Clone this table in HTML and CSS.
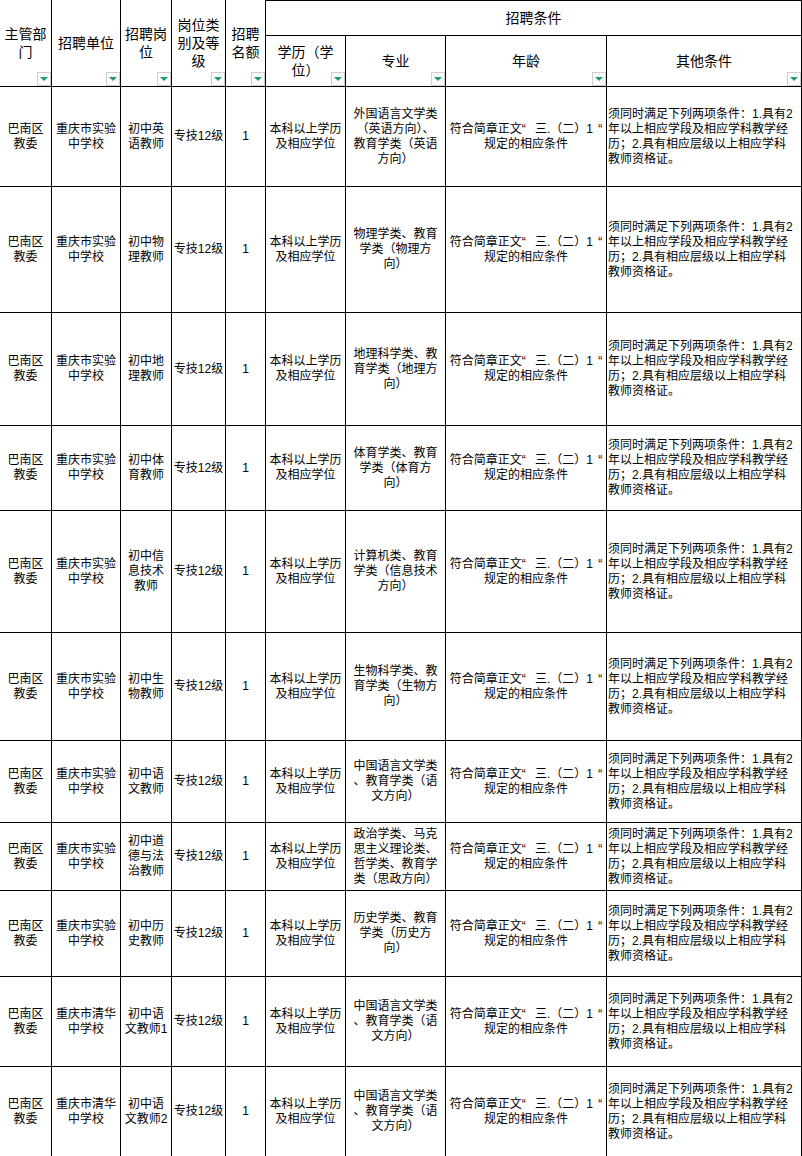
FILE: index.html
```html
<!DOCTYPE html>
<html lang="zh-CN">
<head>
<meta charset="utf-8">
<title>招聘岗位表</title>
<link rel="stylesheet" href="styles.css">
</head>
<body>
<table class="sheet">
  <colgroup>
    <col class="c1"><col class="c2"><col class="c3"><col class="c4"><col class="c5">
    <col class="c6"><col class="c7"><col class="c8"><col class="c9">
  </colgroup>
  <thead>
    <tr class="hr1">
      <th rowspan="2">主管部<br>门<span class="filter"></span></th>
      <th rowspan="2">招聘单位<span class="filter"></span></th>
      <th rowspan="2">招聘岗<br>位<span class="filter"></span></th>
      <th rowspan="2">岗位类<br>别及等<br>级<span class="filter"></span></th>
      <th rowspan="2">招聘<br>名额<span class="filter"></span></th>
      <th colspan="4" class="group">招聘条件</th>
    </tr>
    <tr class="hr2">
      <th>学历（学<br>位）<span class="filter"></span></th>
      <th>专业<span class="filter"></span></th>
      <th>年龄<span class="filter"></span></th>
      <th>其他条件<span class="filter"></span></th>
    </tr>
  </thead>
  <tbody>
    <tr class="h100">
      <td>巴南区<br>教委</td><td>重庆市实验<br>中学校</td><td>初中英<br>语教师</td><td>专技12级</td><td>1</td>
      <td>本科以上学历<br>及相应学位</td>
      <td>外国语言文学类<br>（英语方向）、<br>教育学类（英语<br>方向）</td>
      <td>符合简章正文<span class="qo">“</span> 三.（二）1 <span class="qc">“</span><br>规定的相应条件</td>
      <td class="left">须同时满足下列两项条件：1.具有2<br>年以上相应学段及相应学科教学经<br>历；2.具有相应层级以上相应学科<br>教师资格证。</td>
    </tr>
    <tr class="h126">
      <td>巴南区<br>教委</td><td>重庆市实验<br>中学校</td><td>初中物<br>理教师</td><td>专技12级</td><td>1</td>
      <td>本科以上学历<br>及相应学位</td>
      <td>物理学类、教育<br>学类（物理方<br>向）</td>
      <td>符合简章正文<span class="qo">“</span> 三.（二）1 <span class="qc">“</span><br>规定的相应条件</td>
      <td class="left">须同时满足下列两项条件：1.具有2<br>年以上相应学段及相应学科教学经<br>历；2.具有相应层级以上相应学科<br>教师资格证。</td>
    </tr>
    <tr class="h113">
      <td>巴南区<br>教委</td><td>重庆市实验<br>中学校</td><td>初中地<br>理教师</td><td>专技12级</td><td>1</td>
      <td>本科以上学历<br>及相应学位</td>
      <td>地理科学类、教<br>育学类（地理方<br>向）</td>
      <td>符合简章正文<span class="qo">“</span> 三.（二）1 <span class="qc">“</span><br>规定的相应条件</td>
      <td class="left">须同时满足下列两项条件：1.具有2<br>年以上相应学段及相应学科教学经<br>历；2.具有相应层级以上相应学科<br>教师资格证。</td>
    </tr>
    <tr class="h85">
      <td>巴南区<br>教委</td><td>重庆市实验<br>中学校</td><td>初中体<br>育教师</td><td>专技12级</td><td>1</td>
      <td>本科以上学历<br>及相应学位</td>
      <td>体育学类、教育<br>学类（体育方<br>向）</td>
      <td>符合简章正文<span class="qo">“</span> 三.（二）1 <span class="qc">“</span><br>规定的相应条件</td>
      <td class="left">须同时满足下列两项条件：1.具有2<br>年以上相应学段及相应学科教学经<br>历；2.具有相应层级以上相应学科<br>教师资格证。</td>
    </tr>
    <tr class="h122">
      <td>巴南区<br>教委</td><td>重庆市实验<br>中学校</td><td>初中信<br>息技术<br>教师</td><td>专技12级</td><td>1</td>
      <td>本科以上学历<br>及相应学位</td>
      <td>计算机类、教育<br>学类（信息技术<br>方向）</td>
      <td>符合简章正文<span class="qo">“</span> 三.（二）1 <span class="qc">“</span><br>规定的相应条件</td>
      <td class="left">须同时满足下列两项条件：1.具有2<br>年以上相应学段及相应学科教学经<br>历；2.具有相应层级以上相应学科<br>教师资格证。</td>
    </tr>
    <tr class="h108">
      <td>巴南区<br>教委</td><td>重庆市实验<br>中学校</td><td>初中生<br>物教师</td><td>专技12级</td><td>1</td>
      <td>本科以上学历<br>及相应学位</td>
      <td>生物科学类、教<br>育学类（生物方<br>向）</td>
      <td>符合简章正文<span class="qo">“</span> 三.（二）1 <span class="qc">“</span><br>规定的相应条件</td>
      <td class="left">须同时满足下列两项条件：1.具有2<br>年以上相应学段及相应学科教学经<br>历；2.具有相应层级以上相应学科<br>教师资格证。</td>
    </tr>
    <tr class="h82">
      <td>巴南区<br>教委</td><td>重庆市实验<br>中学校</td><td>初中语<br>文教师</td><td>专技12级</td><td>1</td>
      <td>本科以上学历<br>及相应学位</td>
      <td>中国语言文学类<br>、教育学类（语<br>文方向）</td>
      <td>符合简章正文<span class="qo">“</span> 三.（二）1 <span class="qc">“</span><br>规定的相应条件</td>
      <td class="left">须同时满足下列两项条件：1.具有2<br>年以上相应学段及相应学科教学经<br>历；2.具有相应层级以上相应学科<br>教师资格证。</td>
    </tr>
    <tr class="h68">
      <td>巴南区<br>教委</td><td>重庆市实验<br>中学校</td><td>初中道<br>德与法<br>治教师</td><td>专技12级</td><td>1</td>
      <td>本科以上学历<br>及相应学位</td>
      <td>政治学类、马克<br>思主义理论类、<br>哲学类、教育学<br>类（思政方向）</td>
      <td>符合简章正文<span class="qo">“</span> 三.（二）1 <span class="qc">“</span><br>规定的相应条件</td>
      <td class="left">须同时满足下列两项条件：1.具有2<br>年以上相应学段及相应学科教学经<br>历；2.具有相应层级以上相应学科<br>教师资格证。</td>
    </tr>
    <tr class="h86">
      <td>巴南区<br>教委</td><td>重庆市实验<br>中学校</td><td>初中历<br>史教师</td><td>专技12级</td><td>1</td>
      <td>本科以上学历<br>及相应学位</td>
      <td>历史学类、教育<br>学类（历史方<br>向）</td>
      <td>符合简章正文<span class="qo">“</span> 三.（二）1 <span class="qc">“</span><br>规定的相应条件</td>
      <td class="left">须同时满足下列两项条件：1.具有2<br>年以上相应学段及相应学科教学经<br>历；2.具有相应层级以上相应学科<br>教师资格证。</td>
    </tr>
    <tr class="h90">
      <td>巴南区<br>教委</td><td>重庆市清华<br>中学校</td><td>初中语<br>文教师1</td><td>专技12级</td><td>1</td>
      <td>本科以上学历<br>及相应学位</td>
      <td>中国语言文学类<br>、教育学类（语<br>文方向）</td>
      <td>符合简章正文<span class="qo">“</span> 三.（二）1 <span class="qc">“</span><br>规定的相应条件</td>
      <td class="left">须同时满足下列两项条件：1.具有2<br>年以上相应学段及相应学科教学经<br>历；2.具有相应层级以上相应学科<br>教师资格证。</td>
    </tr>
    <tr class="h90">
      <td>巴南区<br>教委</td><td>重庆市清华<br>中学校</td><td>初中语<br>文教师2</td><td>专技12级</td><td>1</td>
      <td>本科以上学历<br>及相应学位</td>
      <td>中国语言文学类<br>、教育学类（语<br>文方向）</td>
      <td>符合简章正文<span class="qo">“</span> 三.（二）1 <span class="qc">“</span><br>规定的相应条件</td>
      <td class="left">须同时满足下列两项条件：1.具有2<br>年以上相应学段及相应学科教学经<br>历；2.具有相应层级以上相应学科<br>教师资格证。</td>
    </tr>
  </tbody>
</table>
</body>
</html>
```

FILE: styles.css
```css
html, body {
  margin: 0;
  padding: 0;
  background: #ffffff;
}

.sheet {
  table-layout: fixed;
  border-collapse: separate;
  border-spacing: 0;
  width: 802px;
  font-family: "Liberation Sans", "Noto Sans CJK SC", sans-serif;
  color: #000;
}

.c1 { width: 52px; }
.c2 { width: 69px; }
.c3 { width: 51px; }
.c4 { width: 54px; }
.c5 { width: 40px; }
.c6 { width: 80px; }
.c7 { width: 100px; }
.c8 { width: 161px; }
.c9 { width: 195px; }

.sheet th,
.sheet td {
  border-right: 1px solid #000;
  border-bottom: 1px solid #000;
  padding: 0 1px;
  text-align: center;
  vertical-align: middle;
  white-space: nowrap;
  overflow: visible;
  box-sizing: border-box;
}

.sheet th {
  position: relative;
  font-weight: normal;
  font-size: 14px;
  line-height: 18px;
}

.sheet th.group {
  border-top: 1px solid #000;
}

.sheet td {
  font-size: 12px;
  line-height: 15px;
}

.sheet td.left {
  text-align: left;
}

.qo {
  margin-right: 6px;
}

.qc {
  margin-left: 2px;
}

.hr1 { height: 36px; }
.hr2 { height: 51px; }
.h100 { height: 100px; }
.h126 { height: 126px; }
.h113 { height: 113px; }
.h85 { height: 85px; }
.h122 { height: 122px; }
.h108 { height: 108px; }
.h82 { height: 82px; }
.h68 { height: 68px; }
.h86 { height: 86px; }
.h90 { height: 90px; }

.filter {
  position: absolute;
  right: 0;
  bottom: 0;
  width: 14px;
  height: 14px;
  box-sizing: border-box;
  border: 1px solid #cfcfcf;
  background: #fbfbfb;
}

.filter::after {
  content: "";
  position: absolute;
  left: 2px;
  top: 4px;
  width: 0;
  height: 0;
  border-left: 4px solid transparent;
  border-right: 4px solid transparent;
  border-top: 4px solid #239b6e;
}
```
